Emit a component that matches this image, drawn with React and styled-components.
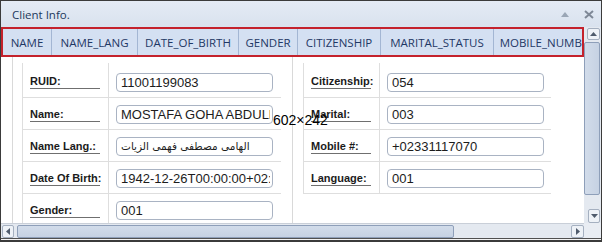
import React from "react";
import styled, { createGlobalStyle } from "styled-components";

const GlobalStyle = createGlobalStyle`
  html, body {
    margin: 0;
    padding: 0;
    background: #ffffff;
  }
  * {
    box-sizing: border-box;
  }
`;

const columns = [
  { title: "NAME", width: 49 },
  { title: "NAME_LANG", width: 86 },
  { title: "DATE_OF_BIRTH", width: 101 },
  { title: "GENDER", width: 59 },
  { title: "CITIZENSHIP", width: 83 },
  { title: "MARITAL_STATUS", width: 113 },
  { title: "MOBILE_NUMBER", width: 108 },
];

const panels = [
  {
    labelWidth: 87,
    underline: 70,
    tableWidth: 259,
    pad: 9,
    rows: [
      { label: "RUID:", value: "11001199083" },
      { label: "Name:", value: "MOSTAFA GOHA ABDULLAH" },
      { label: "Name Lang.:", value: "الهامى مصطفى فهمى الزيات", arabic: true },
      { label: "Date Of Birth:", value: "1942-12-26T00:00:00+02:00" },
      { label: "Gender:", value: "001" },
    ],
  },
  {
    labelWidth: 77,
    underline: 60,
    tableWidth: 248,
    pad: 10,
    rows: [
      { label: "Citizenship:", value: "054" },
      { label: "Marital:", value: "003" },
      { label: "Mobile #:", value: "+02331117070" },
      { label: "Language:", value: "001" },
    ],
  },
];

const Window = styled.div`
  position: relative;
  width: 602px;
  height: 242px;
  border: 1px solid #3b3b3b;
  border-bottom-width: 2px;
  display: grid;
  grid-template-columns: 583px 17px;
  grid-template-rows: 26px 30px 166px 16px 1px;
  background: #dfe6f0;
  overflow: hidden;
`;

const TitleBar = styled.div`
  grid-column: 1 / 3;
  display: flex;
  align-items: center;
  justify-content: space-between;
  padding: 0 7px 0 11px;
  background: linear-gradient(#e4ebf5, #d9e2ee);
  font-family: "Open Sans", "Liberation Sans", sans-serif;
  font-size: 11.5px;
  color: #22395c;
`;

const TitleButtons = styled.div`
  display: flex;
  align-items: center;
  gap: 15px;
`;

const HeaderBar = styled.div`
  grid-column: 1;
  display: flex;
  border: 2px solid #c4222c;
  background: #d4e0f2;
  overflow: hidden;
`;

const HeaderCell = styled.div`
  flex: 0 0 ${(p) => p.$width}px;
  display: flex;
  align-items: center;
  justify-content: center;
  border-right: 1px solid #a3b6d3;
  font-family: "Open Sans", "Liberation Sans", sans-serif;
  font-size: 11.5px;
  color: #1f3865;
  white-space: nowrap;
`;

const Content = styled.div`
  grid-column: 1;
  display: flex;
  padding-left: 11px;
  background: #ffffff;
  overflow: hidden;
`;

const Panel = styled.div`
  flex: 0 0 ${(p) => (p.$last ? "auto" : "280px")};
  border-left: 1px solid #d9d9d9;
  padding: 6px 0 0 ${(p) => p.$pad}px;
`;

const Table = styled.div`
  width: ${(p) => p.$width}px;
`;

const LabelCell = styled.div`
  border-left: 1px solid #dedede;
  border-right: 1px solid #dedede;
  padding: 10px 0 0 7px;
`;

const InputCell = styled.div`
  padding: 7px 0 0 7px;
`;

const Row = styled.div`
  display: grid;
  grid-template-columns: ${(p) => p.$labelWidth}px 1fr;
  height: 32px;
  border-bottom: 1px solid #dedede;
  &:first-child {
    height: 35px;
  }
  &:first-child ${LabelCell} {
    padding-top: 12px;
  }
  &:first-child ${InputCell} {
    padding-top: 10px;
  }
`;

const Label = styled.span`
  display: block;
  width: ${(p) => p.$width}px;
  height: 14px;
  border-bottom: 1px solid #6f6f6f;
  font-family: "Liberation Sans", Arial, sans-serif;
  font-size: 11px;
  font-weight: bold;
  line-height: 13px;
  color: #1b1b1b;
  white-space: nowrap;
`;

const Field = styled.div`
  width: 157px;
  height: 19px;
  padding: 0 2px 0 4px;
  border: 1px solid #a9b3c3;
  border-radius: 4px;
  background: #ffffff;
`;

const Value = styled.span`
  display: block;
  overflow: hidden;
  white-space: nowrap;
  font-family: ${(p) =>
    p.$arabic ? `"DejaVu Sans", sans-serif` : `"Liberation Sans", Arial, sans-serif`};
  font-size: ${(p) => (p.$arabic ? "10.5px" : "13px")};
  line-height: 17px;
  color: #1c1c1c;
  text-align: left;
`;

const VScroll = styled.div`
  grid-column: 2;
  grid-row: 2 / 4;
  display: flex;
  flex-direction: column;
  align-items: flex-end;
  padding: 1px 1px 0 0;
  background: #e4e9f0;
`;

const HScroll = styled.div`
  grid-column: 1;
  display: flex;
  align-items: center;
  padding: 0 0 0 1px;
  border-top: 1px solid #c9cfd8;
  border-bottom: 1px solid #505050;
  background: #e4e9f0;
`;

const Corner = styled.div`
  grid-column: 2;
  border-bottom: 1px solid #505050;
  background: #e9edf3;
`;

const BottomEdge = styled.div`
  grid-column: 1 / 3;
  background: #f4f4f4;
`;

const ArrowButton = styled.div`
  flex: 0 0 auto;
  width: ${(p) => p.$w}px;
  height: ${(p) => p.$h}px;
  display: flex;
  align-items: center;
  justify-content: center;
  border: 1px solid #a5b0c0;
  border-radius: 2px;
  background: #eef2f7;
`;

const VThumb = styled.div`
  width: 16px;
  height: 153px;
  margin-top: 2px;
  border: 1px solid #8e9fb9;
  border-radius: 2px;
  background: linear-gradient(90deg, #d2dcea, #c6d2e3);
`;

const HThumb = styled.div`
  width: 437px;
  height: 13px;
  margin-left: 3px;
  border: 1px solid #8e9fb9;
  border-radius: 2px;
  background: linear-gradient(#d2dcea, #c6d2e3);
`;

const Spacer = styled.div`
  flex: 1;
`;

const Watermark = styled.div`
  position: absolute;
  left: 272px;
  top: 111px;
  font-family: "Liberation Sans", Arial, sans-serif;
  font-size: 14px;
  line-height: 16px;
  color: #000000;
`;

const Triangle = ({ dir }) => {
  const points = {
    up: "0,4 3.5,0 7,4",
    down: "0,0 3.5,4 7,0",
    left: "4,0 0,3.5 4,7",
    right: "0,0 4,3.5 0,7",
  }[dir];
  const vertical = dir === "up" || dir === "down";
  return (
    <svg width={vertical ? 7 : 4} height={vertical ? 4 : 7} viewBox={vertical ? "0 0 7 4" : "0 0 4 7"}>
      <polygon points={points} fill="#4f5b6c" />
    </svg>
  );
};

const App = () => {
  return (
    <Window>
      <GlobalStyle />
      <TitleBar>
        <span>Client Info.</span>
        <TitleButtons>
          <svg width="8" height="5" viewBox="0 0 8 5">
            <polygon points="0,5 4,0 8,5" fill="#9aa6b5" />
          </svg>
          <svg width="10" height="9" viewBox="0 0 10 9">
            <path d="M1 1 L9 8 M9 1 L1 8" stroke="#7e8896" strokeWidth="2" />
          </svg>
        </TitleButtons>
      </TitleBar>

      <HeaderBar>
        {columns.map((c) => (
          <HeaderCell key={c.title} $width={c.width}>
            {c.title}
          </HeaderCell>
        ))}
      </HeaderBar>

      <VScroll>
        <ArrowButton $w={13} $h={12}>
          <Triangle dir="up" />
        </ArrowButton>
        <VThumb />
        <Spacer />
        <ArrowButton $w={12} $h={14}>
          <Triangle dir="down" />
        </ArrowButton>
      </VScroll>

      <Content>
        {panels.map((panel, i) => (
          <Panel key={i} $pad={panel.pad} $last={i === panels.length - 1}>
            <Table $width={panel.tableWidth}>
              {panel.rows.map((row) => (
                <Row key={row.label} $labelWidth={panel.labelWidth}>
                  <LabelCell>
                    <Label $width={panel.underline}>{row.label}</Label>
                  </LabelCell>
                  <InputCell>
                    <Field>
                      <Value $arabic={row.arabic}>{row.value}</Value>
                    </Field>
                  </InputCell>
                </Row>
              ))}
            </Table>
          </Panel>
        ))}
      </Content>

      <HScroll>
        <ArrowButton $w={12} $h={13}>
          <Triangle dir="left" />
        </ArrowButton>
        <HThumb />
        <Spacer />
        <ArrowButton $w={13} $h={13}>
          <Triangle dir="right" />
        </ArrowButton>
      </HScroll>
      <Corner />
      <BottomEdge />

      <Watermark>602×242</Watermark>
    </Window>
  );
};

export default App;
